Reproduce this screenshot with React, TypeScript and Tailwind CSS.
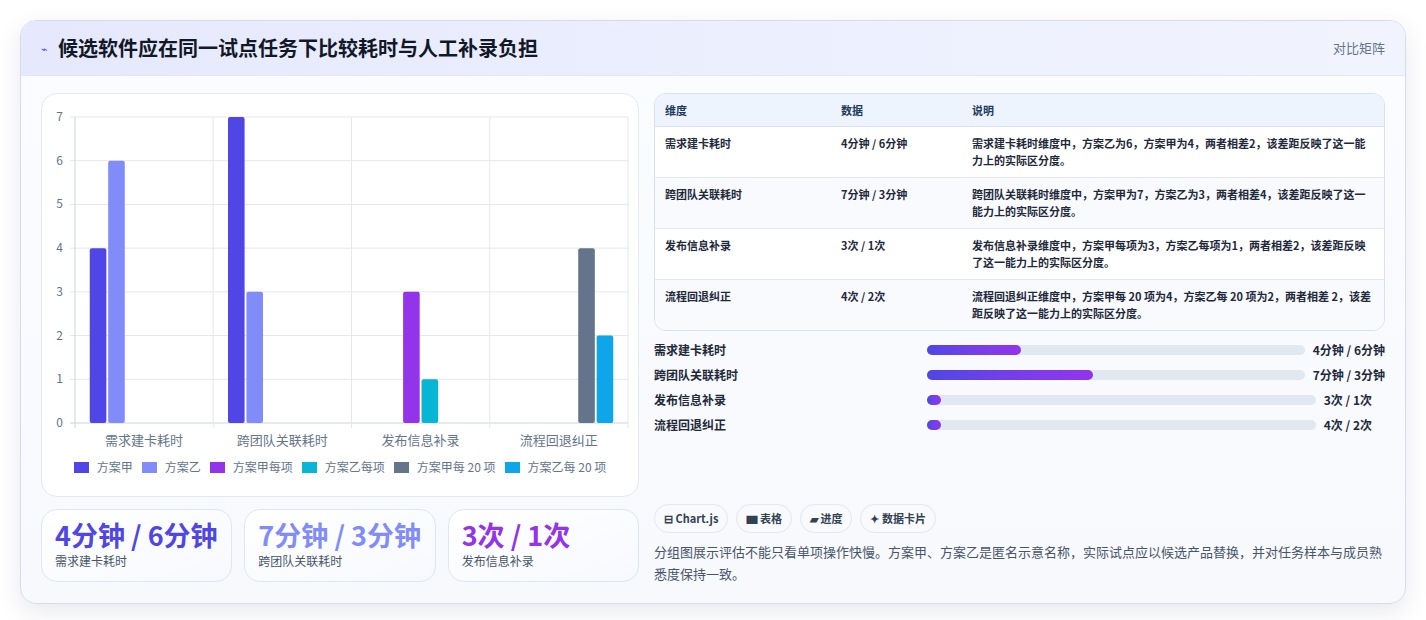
import React from "react";

const font = { fontFamily: '"Noto Sans CJK SC", "Noto Sans", sans-serif' };

const series = [
  { name: "方案甲", color: "#4f46e5" },
  { name: "方案乙", color: "#818cf8" },
  { name: "方案甲每项", color: "#9333ea" },
  { name: "方案乙每项", color: "#06b6d4" },
  { name: "方案甲每 20 项", color: "#64748b" },
  { name: "方案乙每 20 项", color: "#0ea5e9" },
];

const cats = ["需求建卡耗时", "跨团队关联耗时", "发布信息补录", "流程回退纠正"];
// [category, series, value]
const bars: [number, number, number][] = [
  [0, 0, 4], [0, 1, 6], [1, 0, 7], [1, 1, 3], [2, 2, 3], [2, 3, 1], [3, 4, 4], [3, 5, 2],
];

function Chart() {
  const x0 = 33, x1 = 586, top = 23, zero = 329;
  const cw = (x1 - x0) / 4;
  const unit = (zero - top) / 7;
  const slot = (cw * 0.8) / 6;
  return (
    <svg width="598" height="364" className="block">
      {[0, 1, 2, 3, 4, 5, 6, 7].map((v) => {
        const y = zero - v * unit;
        return (
          <g key={v}>
            <line x1={x0 - 5} x2={x1} y1={y} y2={y} stroke={v === 0 ? "#cbd5e1" : "#e5e7eb"} />
            <text x={x0 - 12} y={y + 4} fontSize="12" fill="#64748b" textAnchor="end">{v}</text>
          </g>
        );
      })}
      {[0, 1, 2, 3, 4].map((i) => (
        <line key={i} x1={x0 + i * cw} x2={x0 + i * cw} y1={top} y2={zero + 5} stroke={i === 0 ? "#cbd5e1" : "#e5e7eb"} />
      ))}
      {bars.map(([c, s, v], i) => {
        const bx = x0 + c * cw + cw * 0.1 + s * slot + slot * 0.05;
        const h = v * unit;
        return <rect key={i} x={bx} y={zero - h} width={slot * 0.9} height={h} rx="2" fill={series[s].color} />;
      })}
      {cats.map((c, i) => (
        <text key={c} x={x0 + cw * i + cw / 2} y={351} fontSize="13" fill="#64748b" textAnchor="middle">{c}</text>
      ))}
    </svg>
  );
}

const rows = [
  ["需求建卡耗时", "4分钟 / 6分钟", "需求建卡耗时维度中，方案乙为6，方案甲为4，两者相差2，该差距反映了这一能力上的实际区分度。"],
  ["跨团队关联耗时", "7分钟 / 3分钟", "跨团队关联耗时维度中，方案甲为7，方案乙为3，两者相差4，该差距反映了这一能力上的实际区分度。"],
  ["发布信息补录", "3次 / 1次", "发布信息补录维度中，方案甲每项为3，方案乙每项为1，两者相差2，该差距反映了这一能力上的实际区分度。"],
  ["流程回退纠正", "4次 / 2次", "流程回退纠正维度中，方案甲每 20 项为4，方案乙每 20 项为2，两者相差 2，该差距反映了这一能力上的实际区分度。"],
];

const progress = [
  ["需求建卡耗时", 25, "4分钟 / 6分钟"],
  ["跨团队关联耗时", 44, "7分钟 / 3分钟"],
  ["发布信息补录", 3, "3次 / 1次"],
  ["流程回退纠正", 3, "4次 / 2次"],
] as const;

export default function App() {
  return (
    <div className="min-h-screen bg-white p-5" style={font}>
      <div className="rounded-2xl border border-[#d5dcf0] bg-gradient-to-b from-[#fbfcff] to-[#f7f9fd] shadow-[0_8px_24px_rgba(30,41,80,0.10)] overflow-hidden">
        <div className="h-[55px] flex items-center justify-between px-5 bg-gradient-to-r from-[#e6e9fd] to-[#f1f4fe] border-b border-[#e3e8f5]">
          <div className="flex items-center gap-2.5">
            <span className="text-[#4f46e5] text-[11px]">⌁</span>
            <h1 className="text-[20px] font-bold text-[#111827]">候选软件应在同一试点任务下比较耗时与人工补录负担</h1>
          </div>
          <span className="text-[13px] text-[#64748b]">对比矩阵</span>
        </div>
        <div className="flex gap-[15px] px-5 pt-[17px] pb-[18px]">
          <div className="w-[598px] flex flex-col gap-3">
            <div className="h-[404px] rounded-2xl border border-[#e3e8f2] bg-white">
              <Chart />
              <div className="flex justify-center gap-[9px] text-[12px] text-[#64748b]">
                {series.map((s) => (
                  <div key={s.name} className="flex items-center gap-2">
                    <span className="w-[15px] h-[11px]" style={{ background: s.color }} />
                    {s.name}
                  </div>
                ))}
              </div>
            </div>
            <div className="grid grid-cols-3 gap-3">
              {[
                ["4分钟 / 6分钟", "需求建卡耗时", "text-[#4f46e5]"],
                ["7分钟 / 3分钟", "跨团队关联耗时", "text-[#818cf8]"],
                ["3次 / 1次", "发布信息补录", "text-[#9333ea]"],
              ].map(([v, l, c]) => (
                <div key={l} className="h-[73px] rounded-2xl border border-[#dfe6f3] bg-gradient-to-br from-white to-[#f7f9fe] px-[13px] pt-[8px]">
                  <div className={`text-[27px] font-bold leading-[34px] ${c}`}>{v}</div>
                  <div className="text-[12px] text-[#475569]">{l}</div>
                </div>
              ))}
            </div>
          </div>
          <div className="flex-1 flex flex-col">
            <div className="rounded-xl border border-[#d9e0ee] overflow-hidden text-[11px] text-[#1e293b]">
              <div className="grid grid-cols-[176px_131px_1fr] h-[33px] items-center bg-[#eef4fe] font-bold text-[#1e3a5f] px-[10px] border-b border-[#d9e0ee]">
                <span>维度</span><span>数据</span><span>说明</span>
              </div>
              {rows.map((r, i) => (
                <div key={r[0]} className={`grid grid-cols-[176px_131px_1fr] px-[10px] py-[8px] leading-[17px] ${i % 2 ? "bg-[#f8fafd]" : "bg-white"} ${i < 3 ? "border-b border-[#e3e8f2]" : ""}`}>
                  <span className="font-semibold">{r[0]}</span>
                  <span className="font-semibold">{r[1]}</span>
                  <span className="font-semibold">{r[2]}</span>
                </div>
              ))}
            </div>
            <div className="flex flex-col gap-[7px] mt-[10px] text-[12px] font-bold text-[#1e293b]">
              {progress.map(([l, p, v]) => (
                <div key={l} className="flex items-center h-[18px]">
                  <span className="w-[273px]">{l}</span>
                  <div className="flex-1 h-[10px] rounded-full bg-[#e2e8f0] mr-2">
                    <div className="h-full rounded-full bg-gradient-to-r from-[#4f46e5] to-[#9333ea]" style={{ width: `${p}%`, minWidth: 14 }} />
                  </div>
                  <span className={v.length > 8 ? "" : "pr-[13px]"}>{v}</span>
                </div>
              ))}
            </div>
            <div className="flex gap-2 mt-[70px] text-[11px] font-bold text-[#334155]">
              {["⊟ Chart.js", "▆ 表格", "▰ 进度", "✦ 数据卡片"].map((c) => (
                <span key={c} className="h-[29px] flex items-center px-[9px] rounded-full border border-[#e2e8f0] bg-[#f8fafc]">{c}</span>
              ))}
            </div>
            <p className="mt-[8px] text-[13px] leading-[22px] text-[#475569]">
              分组图展示评估不能只看单项操作快慢。方案甲、方案乙是匿名示意名称，实际试点应以候选产品替换，并对任务样本与成员熟悉度保持一致。
            </p>
          </div>
        </div>
      </div>
    </div>
  );
}
